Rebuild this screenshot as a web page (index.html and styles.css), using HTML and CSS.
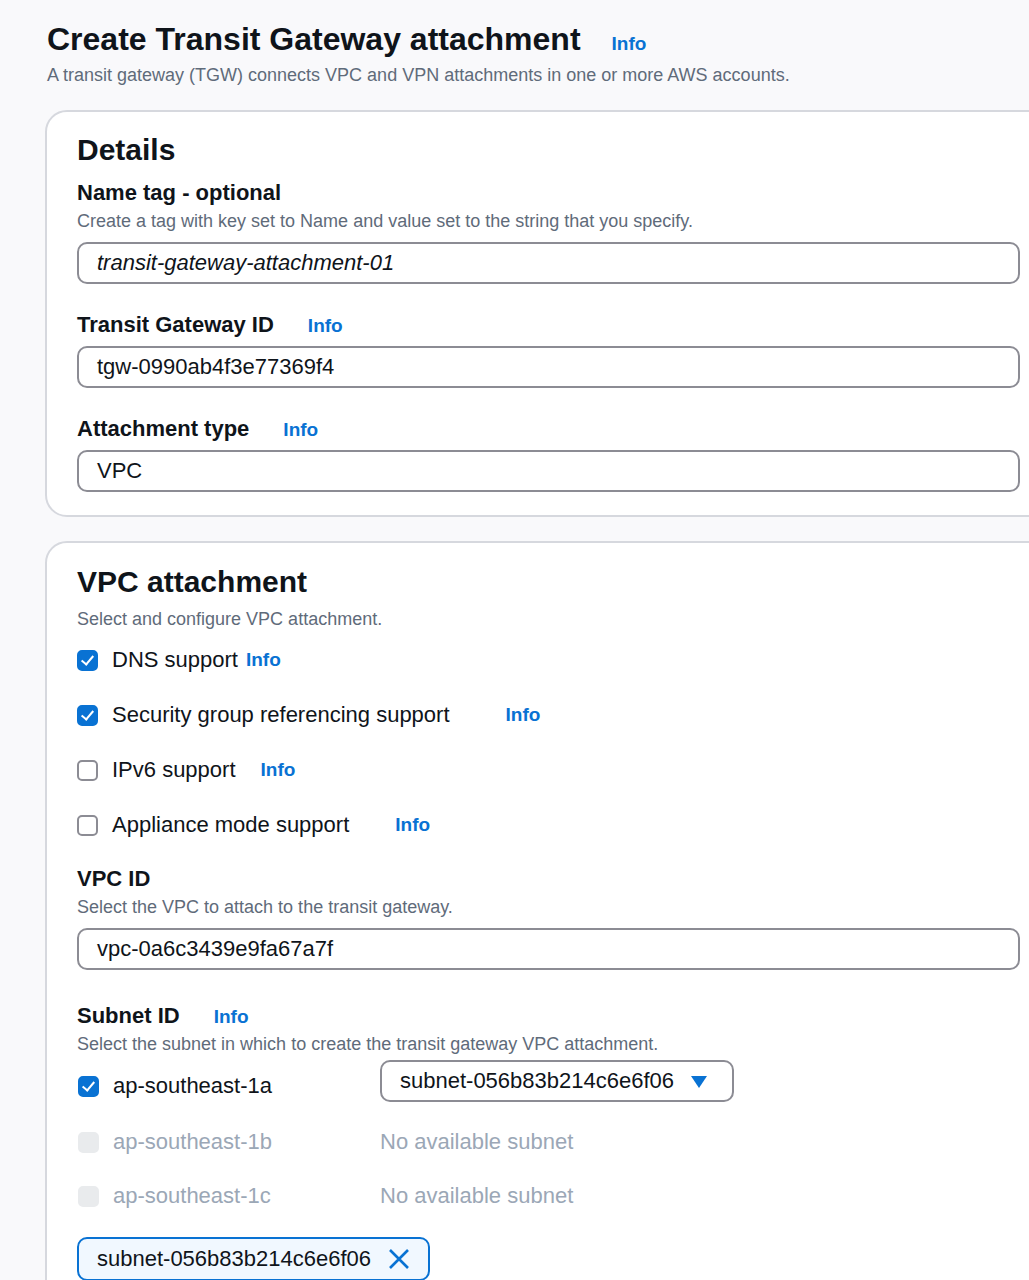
FILE: index.html
```html
<!DOCTYPE html>
<html lang="en">
<head>
    <meta charset="UTF-8">
    <title>Create Transit Gateway attachment</title>
    <link rel="stylesheet" href="styles.css">
</head>
<body>
<div class="page">
    <div class="header">
        <div class="title-row">
            <h1>Create Transit Gateway attachment</h1>
            <a class="info" href="">Info</a>
        </div>
        <p class="subtitle">A transit gateway (TGW) connects VPC and VPN attachments in one or more AWS accounts.</p>
    </div>

    <div class="card">
        <h2>Details</h2>
        <div class="field">
            <div class="label-row"><span class="label">Name tag - optional</span></div>
            <p class="desc">Create a tag with key set to Name and value set to the string that you specify.</p>
            <div class="input italic">transit-gateway-attachment-01</div>
        </div>
        <div class="field">
            <div class="label-row"><span class="label">Transit Gateway ID</span><a class="info" href="">Info</a></div>
            <div class="input">tgw-0990ab4f3e77369f4</div>
        </div>
        <div class="field">
            <div class="label-row"><span class="label">Attachment type</span><a class="info" href="">Info</a></div>
            <div class="input">VPC</div>
        </div>
    </div>

    <div class="card">
        <h2>VPC attachment</h2>
        <p class="desc">Select and configure VPC attachment.</p>
        <ul class="checks">
            <li><span class="box checked"></span><span class="check-text">DNS support</span><a class="info tight" href="">Info</a></li>
            <li><span class="box checked"></span><span class="check-text">Security group referencing support</span><a class="info wide" href="">Info</a></li>
            <li><span class="box"></span><span class="check-text">IPv6 support</span><a class="info mid" href="">Info</a></li>
            <li><span class="box"></span><span class="check-text">Appliance mode support</span><a class="info wider" href="">Info</a></li>
        </ul>
        <div class="field">
            <div class="label-row"><span class="label">VPC ID</span></div>
            <p class="desc">Select the VPC to attach to the transit gateway.</p>
            <div class="input">vpc-0a6c3439e9fa67a7f</div>
        </div>
        <div class="field subnet-field">
            <div class="label-row"><span class="label">Subnet ID</span><a class="info" href="">Info</a></div>
            <p class="desc">Select the subnet in which to create the transit gateway VPC attachment.</p>
            <div class="subnets">
                <div class="zone"><span class="box checked"></span><span class="check-text">ap-southeast-1a</span></div>
                <div class="select">
                    <span>subnet-056b83b214c6e6f06</span>
                    <svg class="caret" width="18" height="14" viewBox="0 0 18 14"><path d="M1 1h16L9 13z" fill="#0972d3"/></svg>
                </div>
                <div class="zone off"><span class="box disabled"></span><span class="check-text">ap-southeast-1b</span></div>
                <div class="none">No available subnet</div>
                <div class="zone off"><span class="box disabled"></span><span class="check-text">ap-southeast-1c</span></div>
                <div class="none">No available subnet</div>
            </div>
            <div class="token">
                <span>subnet-056b83b214c6e6f06</span>
                <svg width="22" height="22" viewBox="0 0 22 22"><path d="M2 2L20 20M20 2L2 20" stroke="#0972d3" stroke-width="2.6" fill="none"/></svg>
            </div>
        </div>
    </div>
</div>
</body>
</html>
```

FILE: styles.css
```css
* {
    margin: 0;
    padding: 0;
    box-sizing: border-box;
}

body {
    background-color: #f9f9fb;
    font-family: "Liberation Sans", Arial, sans-serif;
    color: #0f141a;
    overflow: hidden;
}

.page {
    padding: 20px 0 0 45px;
    width: 1100px;
}

.header {
    padding-left: 2px;
}

.title-row {
    display: flex;
    align-items: baseline;
}

h1 {
    font-size: 32px;
    line-height: 38px;
    font-weight: bold;
}

.title-row .info {
    margin-left: 31px;
}

.subtitle {
    margin-top: 5px;
    font-size: 18px;
    line-height: 24px;
    color: #5f6b7a;
}

.info {
    color: #0972d3;
    font-weight: bold;
    font-size: 19px;
    text-decoration: none;
}

.card {
    width: 1010px;
    margin-top: 23px;
    background-color: #fff;
    border: 2px solid #d6d8de;
    border-radius: 22px;
    padding: 20px 33px 23px 30px;
}

.card + .card {
    margin-top: 24px;
    padding-top: 21px;
}

h2 {
    font-size: 30px;
    line-height: 36px;
    font-weight: bold;
}

.field {
    margin-top: 27px;
}

h2 + .field {
    margin-top: 11px;
}

.label-row {
    display: flex;
    align-items: baseline;
}

.label {
    font-size: 22px;
    line-height: 28px;
    font-weight: bold;
}

.label-row .info {
    margin-left: 34px;
}

.desc {
    margin-top: 2px;
    font-size: 18px;
    line-height: 24px;
    color: #5f6b7a;
}

h2 + .desc {
    margin-top: 7px;
}

.input {
    margin-top: 9px;
    height: 42px;
    border: 2px solid #8c8c94;
    border-radius: 10px;
    padding: 0 18px;
    font-size: 22px;
    line-height: 38px;
}

.label-row + .input {
    margin-top: 7px;
}

.italic {
    font-style: italic;
}

.checks {
    list-style: none;
    margin-top: 15px;
    display: flex;
    flex-direction: column;
    gap: 27px;
}

.checks li {
    display: flex;
    align-items: center;
    height: 28px;
}

.checks + .field {
    margin-top: 26px;
}

.box {
    width: 21px;
    height: 21px;
    border: 2px solid #8c8c94;
    border-radius: 5px;
    margin-right: 14px;
    flex-shrink: 0;
    position: relative;
}

.box.checked {
    background-color: #0972d3;
    border-color: #0972d3;
}

.box.checked::after {
    content: "";
    position: absolute;
    left: 5px;
    top: 1px;
    width: 5px;
    height: 10px;
    border-right: 2.5px solid #fff;
    border-bottom: 2.5px solid #fff;
    transform: rotate(40deg);
}

.box.disabled {
    background-color: #e9ebed;
    border-color: #e9ebed;
}

.check-text {
    font-size: 22px;
    line-height: 28px;
}

.checks .info {
    font-size: 19px;
}

.info.tight {
    margin-left: 8px;
}

.info.wide {
    margin-left: 56px;
}

.info.mid {
    margin-left: 25px;
}

.info.wider {
    margin-left: 46px;
}

.subnet-field {
    margin-top: 32px;
}

.subnets {
    margin-top: 4px;
    display: grid;
    grid-template-columns: 303px 354px;
    row-gap: 26px;
}

.zone {
    display: flex;
    align-items: center;
    height: 28px;
    padding-left: 1px;
}

.subnets .zone:first-child {
    margin-top: 12px;
}

.zone.off .check-text,
.none {
    color: #9ba7b6;
}

.none {
    font-size: 22px;
    line-height: 28px;
}

.select {
    height: 42px;
    border: 2px solid #8c8c94;
    border-radius: 10px;
    padding: 0 24px 0 18px;
    display: flex;
    align-items: center;
    justify-content: space-between;
    font-size: 22px;
}

.caret {
    margin-top: 2px;
}

.token {
    margin-top: 27px;
    width: 353px;
    height: 44px;
    border: 2px solid #0972d3;
    border-radius: 10px;
    background-color: #f1f8ff;
    padding: 0 18px;
    display: flex;
    align-items: center;
    justify-content: space-between;
    font-size: 22px;
}
```
